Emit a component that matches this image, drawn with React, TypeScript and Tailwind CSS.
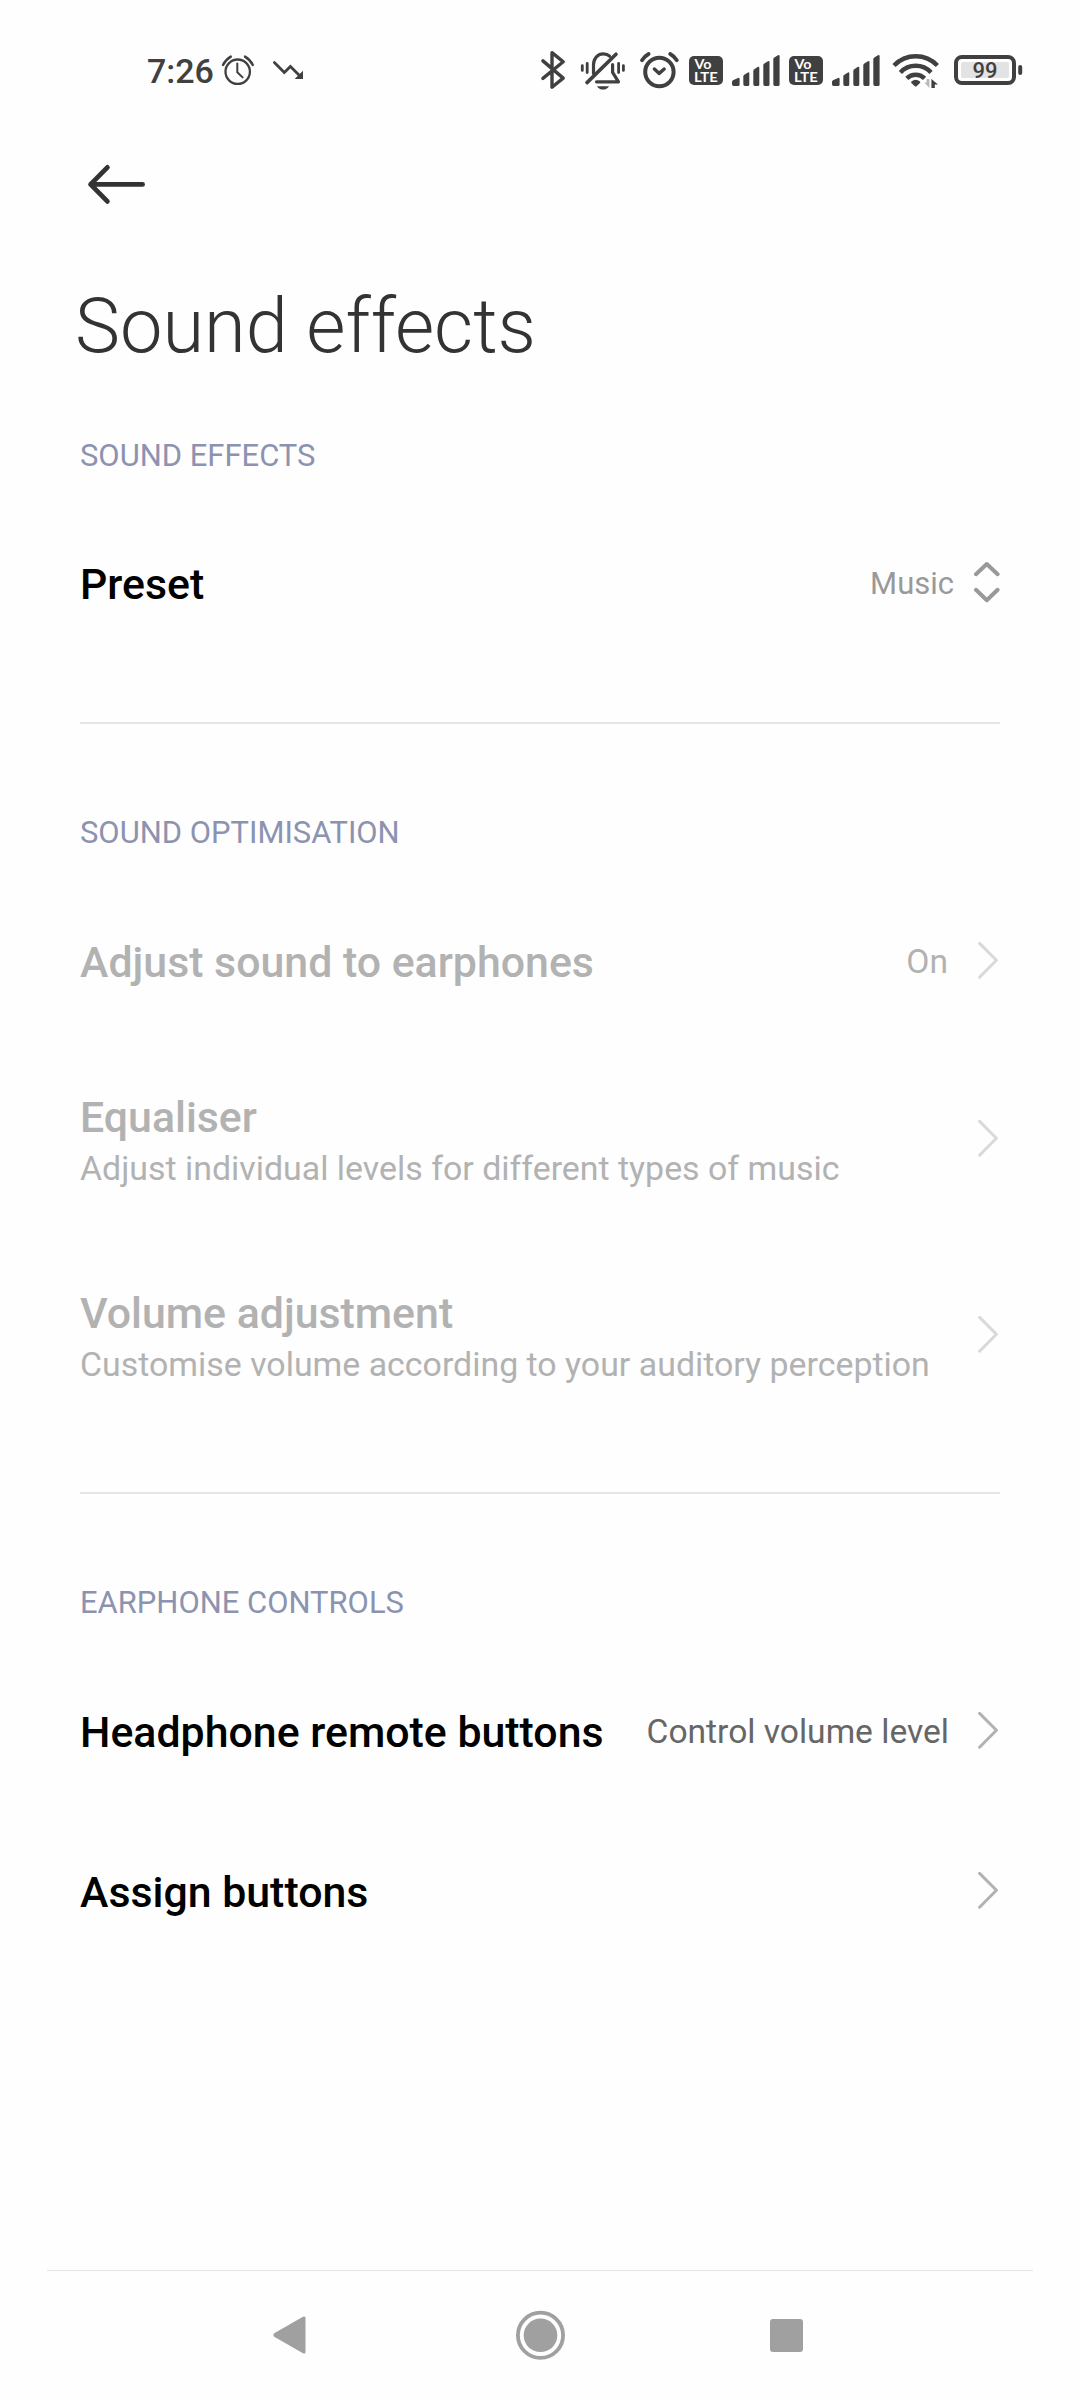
import { ReactNode } from "react";

interface RowProps {
  title: string;
  desc?: string;
  value?: string;
  disabled?: boolean;
}

function SmallAlarmIcon() {
  return (
    <svg width="34" height="40" viewBox="0 0 34 40" fill="none" stroke="#404040" strokeLinecap="round">
      <circle cx="16.7" cy="21.7" r="12.2" strokeWidth="2.3" />
      <path d="M16.3 13.6V22.2L21.6 27.4" strokeWidth="2" strokeLinejoin="round" />
      <path d="M2 15C3.8 11.2 6.4 8.6 9.8 6.6M31.8 15C30 11.2 27.4 8.6 24 6.6" strokeWidth="2.4" />
    </svg>
  );
}

function TrendIcon() {
  return (
    <svg width="32" height="40" viewBox="0 0 32 40" fill="none">
      <path d="M2.4 12.4L12.3 22.4L18.4 16.4L28 26" stroke="#404040" strokeWidth="2.8" strokeLinecap="round" />
      <path d="M31 20.8V29H22.6Z" fill="#404040" />
    </svg>
  );
}

function BluetoothIcon() {
  return (
    <svg width="26" height="40" viewBox="0 0 26 40" fill="none" stroke="#404040" strokeWidth="3.4" strokeLinecap="round" strokeLinejoin="round">
      <path d="M2.9 10.9L23.2 28.1L12 37.2V2.6L23.2 11.8L2.9 28.4" />
    </svg>
  );
}

function BellOffIcon() {
  return (
    <svg width="46" height="40" viewBox="0 0 46 40" fill="none" stroke="#404040" strokeWidth="3.2" strokeLinecap="round" strokeLinejoin="round">
      <path d="M13.5 23.5V15C13.5 8 18 3.9 23.3 3.9C25.8 3.9 28 4.6 29.6 6.2" />
      <path d="M32.6 14.5V22.4L38.5 31.8H16.5" />
      <path d="M36 4.2L7 32.6" strokeWidth="3.6" />
      <path d="M17 36.2H29C27.6 38.5 25.6 39.6 23 39.6C20.4 39.6 18.4 38.5 17 36.2Z" fill="#404040" stroke="none" />
      <path d="M2.3 15.6V20.4M7.2 13.4V22.6M38.6 13.4V22.6M43.4 15.6V20.4" strokeWidth="2.8" />
    </svg>
  );
}

function AlarmIcon() {
  return (
    <svg width="41" height="40" viewBox="0 0 41 40" fill="none" stroke="#404040" strokeLinecap="round" strokeLinejoin="round">
      <circle cx="20.4" cy="22" r="14.2" strokeWidth="4" />
      <path d="M15.4 19L20.2 23.4L25.2 19" strokeWidth="3.4" />
      <path d="M3 10.2C4.9 7.3 7 5.4 9.6 4M37.8 10.2C35.9 7.3 33.8 5.4 31.2 4" strokeWidth="3.8" />
    </svg>
  );
}

function VolteIcon() {
  return (
    <svg width="34" height="40" viewBox="0 0 34 40" fill="#fff" fontFamily="Lato, sans-serif" fontWeight="700">
      <rect x="0" y="6" width="34" height="29" rx="5" fill="#404040" />
      <text x="5.4" y="19" fontSize="12.4" textLength="17" lengthAdjust="spacingAndGlyphs">Vo</text>
      <text x="5" y="31.6" fontSize="13" textLength="23.8" lengthAdjust="spacingAndGlyphs">LTE</text>
    </svg>
  );
}

function SignalIcon() {
  return (
    <svg width="48" height="40" viewBox="0 0 48 40" fill="#404040">
      <path d="M0 34V32Q0 31 1 30.3L6 27.9Q7.6 27.4 7.6 29V34.4Q7.6 36 6 36H1.6Q0 36 0 34Z" />
      <path d="M11.3 34V26.6Q11.3 25.4 12.3 24.7L16 22.4Q17.3 22 17.3 23.4V34.4Q17.3 36 15.8 36H12.8Q11.3 36 11.3 34Z" />
      <path d="M21.3 34V21.2Q21.3 20 22.3 19.2L26 16.8Q27.3 16.4 27.3 17.8V34.4Q27.3 36 25.8 36H22.8Q21.3 36 21.3 34Z" />
      <path d="M31.3 34V15.4Q31.3 14.2 32.3 13.5L36 11.2Q37.5 10.6 37.5 12.2V34.4Q37.5 36 36 36H32.8Q31.3 36 31.3 34Z" />
      <path d="M41.3 34V9.4Q41.3 8.2 42.3 7.5L46 5.2Q47.6 4.6 47.6 6.2V34.4Q47.6 36 46 36H42.8Q41.3 36 41.3 34Z" />
    </svg>
  );
}

function WifiIcon() {
  return (
    <svg width="48" height="40" viewBox="0 0 48 40" fill="none" stroke="#404040" strokeWidth="4.4">
      <path d="M2 15.6A30 30 0 0 1 45.4 15.6" />
      <path d="M8.4 22.4A21 21 0 0 1 39 22.4" />
      <path d="M14.8 28.4A12.6 12.6 0 0 1 32.6 28.4" />
      <path d="M19.4 31.6Q23.7 27.8 28 31.6Q28.6 32.4 28 33L24.8 36Q23.7 37 22.6 36L19.4 33Q18.8 32.4 19.4 31.6Z" fill="#404040" stroke="none" />
      <path d="M37.4 29V38L32.4 32.6H34.6V29Z" fill="#b8b8b8" stroke="none" />
      <path d="M39.4 38V29L46 34.4H42.8V38Z" fill="#404040" stroke="none" />
    </svg>
  );
}

function BatteryIcon() {
  return (
    <svg width="70" height="40" viewBox="0 0 70 40">
      <rect x="3" y="7" width="58" height="26" rx="6" fill="none" stroke="#404040" strokeWidth="4" />
      <rect x="8" y="12" width="48" height="16" rx="2" fill="#e3e3e3" />
      <rect x="65.2" y="15" width="4" height="10" rx="2" fill="#404040" />
      <text x="19.6" y="28.4" fontSize="22" textLength="25" lengthAdjust="spacingAndGlyphs" fontFamily="Roboto, sans-serif" fontWeight="500" fill="#404040">99</text>
    </svg>
  );
}

function StatusBar() {
  return (
    <div className="flex h-[140px] shrink-0 items-start pt-[50px] pl-[147px]">
      <span className="w-[74px] text-[34px] leading-[43px] font-medium text-[#404040]">7:26</span>
      <SmallAlarmIcon />
      <div className="ml-[17px] w-[268px]">
        <TrendIcon />
      </div>
      <BluetoothIcon />
      <div className="ml-[14px]"><BellOffIcon /></div>
      <div className="ml-[13px]"><AlarmIcon /></div>
      <div className="ml-[9px] flex gap-[9px]">
        <VolteIcon />
        <SignalIcon />
        <VolteIcon />
        <SignalIcon />
      </div>
      <div className="ml-[12px]"><WifiIcon /></div>
      <div className="ml-[13px]"><BatteryIcon /></div>
    </div>
  );
}

function Chevron({ disabled }: { disabled?: boolean }) {
  return (
    <svg width="22" height="40" viewBox="0 0 22 40" className="mb-[2px] shrink-0" fill="none" stroke={disabled ? "#d9d9d9" : "#b2b2b2"} strokeWidth="3" strokeLinecap="round" strokeLinejoin="round">
      <path d="M1.6 3.4L18.4 20.3L1.6 37.2" />
    </svg>
  );
}

function Row({ title, desc, value, disabled }: RowProps) {
  return (
    <div className={`flex items-center justify-between ${desc ? "h-[196px]" : "h-[160px]"} ${disabled ? "text-[#b2b2b2]" : "text-black"}`}>
      <div className={desc ? "pt-[7px]" : "pt-[2px]"}>
        <div className="text-[42.85px] leading-[52px] font-medium whitespace-nowrap">{title}</div>
        {desc && <div className="text-[33.9px] leading-[51px] whitespace-nowrap">{desc}</div>}
      </div>
      <div className="flex items-center">
        {value && (
          <span className={`pt-px text-[33.6px] leading-[40px] whitespace-nowrap ${disabled ? "mr-[30px]" : "mr-[29px] text-[#666666]"}`}>{value}</span>
        )}
        <Chevron disabled={disabled} />
      </div>
    </div>
  );
}

function Section({ label, children }: { label: string; children: ReactNode }) {
  return (
    <section className="border-t-2 border-[#e5e5e5] pt-[84px] pb-[59px]">
      <h2 className="h-[73px] text-[30.95px] leading-[50px] text-[#8c93b0]">{label}</h2>
      {children}
    </section>
  );
}

function NavBar() {
  return (
    <div className="mx-[47px] flex h-[130px] shrink-0 items-center border-t border-[#e4e4e4] pb-px pl-[226px]">
      <svg width="33" height="38" viewBox="0 0 33 38" fill="#a0a0a0">
        <path d="M1.2 17.2L30 0.8Q32.5 -0.4 32.5 2V36Q32.5 38.4 30 37.2L1.2 20.8Q-0.4 19 1.2 17.2Z" />
      </svg>
      <svg width="50" height="50" viewBox="0 0 50 50" className="ml-[209px]" fill="#a0a0a0">
        <circle cx="25.5" cy="25.3" r="22.6" fill="none" stroke="#a0a0a0" strokeWidth="3.8" />
        <circle cx="25.5" cy="25.3" r="16.8" />
      </svg>
      <div className="ml-[205px] size-[33px] rounded-[3px] bg-[#a0a0a0]" />
    </div>
  );
}

export default function App() {
  return (
    <div className="flex h-[2400px] w-[1080px] flex-col bg-[#fefefe] font-[Roboto,sans-serif]">
      <StatusBar />
      <header className="h-[364px] shrink-0">
        <svg width="60" height="44" viewBox="0 0 60 44" className="mt-[22px] ml-[87px]" fill="none" stroke="#333333" strokeWidth="4.8" strokeLinecap="round" strokeLinejoin="round">
          <path d="M55.6 22.4H3.6M20.4 5.4L3.6 22.4L20.4 39.4" />
        </svg>
        <h1 className="mt-[76px] pl-[75px] text-[75.8px] leading-[90px] font-light text-[#333333]">Sound effects</h1>
        <h2 className="mt-[59px] pl-[80px] text-[30.95px] leading-[50px] text-[#8c93b0]">SOUND EFFECTS</h2>
      </header>

      <main className="flex-1 px-[80px]">
        <div className="flex h-[218px] items-start">
          <div className="flex h-[160px] w-full items-center justify-between">
            <span className="text-[42.85px] leading-[52px] font-medium text-black">Preset</span>
            <div className="flex items-center">
              <span className="mr-[18px] text-[31px] leading-[40px] text-[#999999]">Music</span>
              <svg width="28" height="44" viewBox="0 0 28 44" className="mb-[4px]" fill="none" stroke="#999999" strokeWidth="4" strokeLinecap="round" strokeLinejoin="round">
                <path d="M4 14.2L14.8 4L25.6 14.2M4 29.8L14.8 40.2L25.6 29.8" />
              </svg>
            </div>
          </div>
        </div>

        <Section label="SOUND OPTIMISATION">
          <Row title="Adjust sound to earphones" value="On" disabled />
          <Row title="Equaliser" desc="Adjust individual levels for different types of music" disabled />
          <Row title="Volume adjustment" desc="Customise volume according to your auditory perception" disabled />
        </Section>

        <Section label="EARPHONE CONTROLS">
          <Row title="Headphone remote buttons" value="Control volume level" />
          <Row title="Assign buttons" />
        </Section>
      </main>

      <NavBar />
    </div>
  );
}
